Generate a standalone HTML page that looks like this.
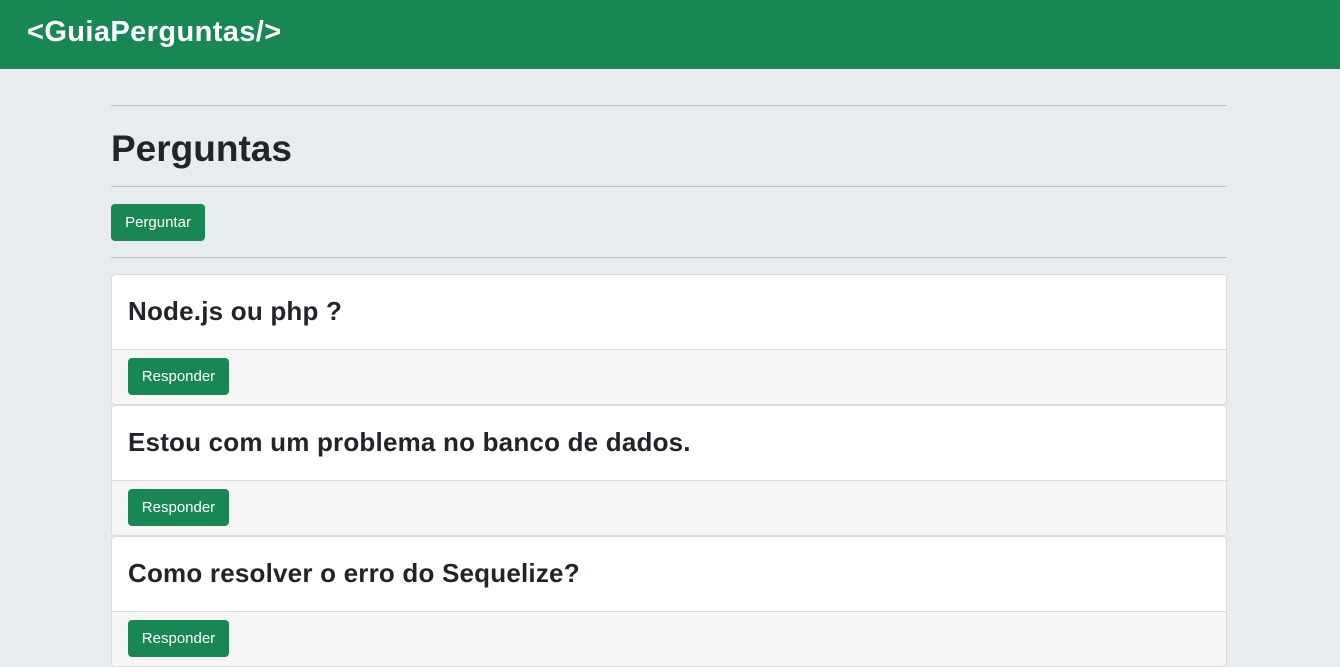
<!DOCTYPE html>
<html><head><meta charset="utf-8"><style>
*{box-sizing:border-box;margin:0;padding:0}
body{width:1340px;height:612px;overflow:hidden;background:#e9ecef;font-family:"Liberation Sans","DejaVu Sans",sans-serif;color:#212529}
.nav{height:69px;background:#198754;padding-left:27px}
.brand{color:#fff;font-size:29px;font-weight:bold;line-height:64px;letter-spacing:0.4px}
hr{position:absolute;left:111px;width:1116px;height:0;border:0;border-top:1px solid #bfc2c5}
h1{position:absolute;left:111px;top:126px;font-size:37px;font-weight:bold;line-height:46px}
.btn{position:absolute;background:#198754;color:#fff;font-size:15px;border-radius:4px;text-align:center;line-height:37px;height:37px}
.card{position:absolute;left:111px;width:1116px;background:#fff;border:1px solid #d9dbdd;border-radius:4px;overflow:hidden}
.card h4{height:74px;font-size:26px;font-weight:bold;line-height:72px;padding-left:16px;letter-spacing:0.2px}
.foot{height:56px;background:#f6f6f6;border-top:1px solid #d9dbdd;position:relative}
.foot .btn{left:16px;top:8px;width:101px}
</style></head><body>
<div class="nav"><span class="brand">&lt;GuiaPerguntas/&gt;</span></div>
<hr style="top:105px"><h1>Perguntas</h1><hr style="top:186px">
<div class="btn" style="left:111px;top:204px;width:94px">Perguntar</div>
<hr style="top:257px">
<div class="card" style="top:274px;height:131px"><h4>Node.js ou php ?</h4><div class="foot"><div class="btn">Responder</div></div></div>
<div class="card" style="top:405px;height:131px"><h4>Estou com um problema no banco de dados.</h4><div class="foot"><div class="btn">Responder</div></div></div>
<div class="card" style="top:536px;height:131px"><h4>Como resolver o erro do Sequelize?</h4><div class="foot"><div class="btn">Responder</div></div></div>
</body></html>
